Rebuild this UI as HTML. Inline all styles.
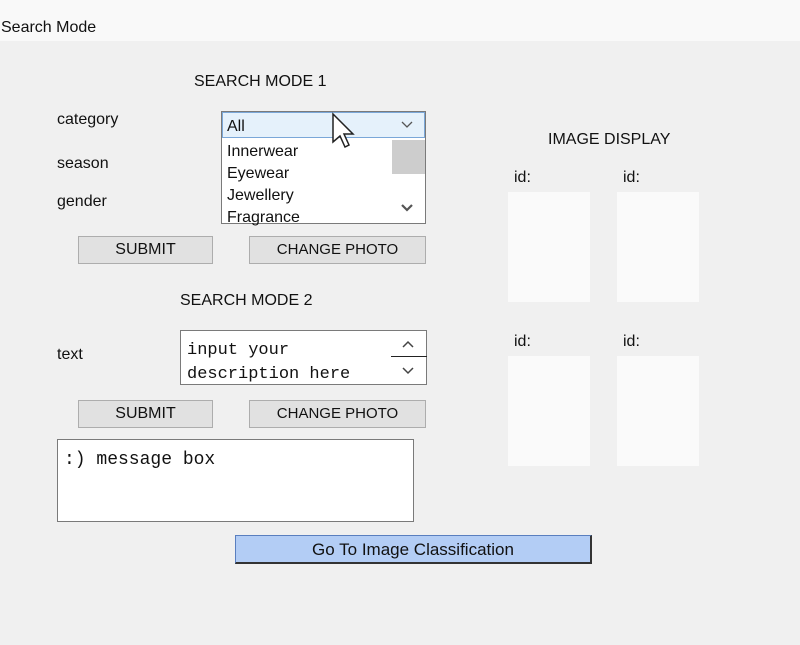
<!DOCTYPE html>
<html><head><style>
body{margin:0;width:800px;height:645px;background:#f0f0f0;font-family:"Liberation Sans",sans-serif;position:relative;overflow:hidden;color:#111}
.a{position:absolute}
.t{font-size:16px}
.btn{position:absolute;background:#e1e1e1;border:1px solid #adadad;box-sizing:border-box;text-align:center;font-size:16px;line-height:26px}
.img{position:absolute;background:#fafafa;width:82px;height:110px}
.mono{font-family:"Liberation Mono",monospace;font-size:18px}
</style></head><body>
<div class="a" style="left:0;top:0;width:800px;height:41px;background:#f9f9f9"></div>
<div class="a t" style="left:1px;top:19px">Search Mode</div>
<div class="a t" style="left:194px;top:73px">SEARCH MODE 1</div>
<div class="a t" style="left:57px;top:111px">category</div>
<div class="a t" style="left:57px;top:155px">season</div>
<div class="a t" style="left:57px;top:193px">gender</div>
<div class="a" style="left:221px;top:111px;width:205px;height:113px;background:#fff;border:1px solid #7a7a7a;box-sizing:border-box">
 <div class="a" style="left:0;top:0;width:203px;height:26px;background:#e5f1fb;border:1px solid #7aa7d8;box-sizing:border-box"></div>
 <div class="a t" style="left:5px;top:6px">All</div>
 <svg class="a" style="left:178px;top:8px" width="14" height="10"><path d="M2 2 L7 7 L12 2" fill="none" stroke="#555" stroke-width="1.3"/></svg>
 <div class="a t" style="left:5px;top:29px;line-height:22px">Innerwear<br>Eyewear<br>Jewellery<br>Fragrance</div>
 <div class="a" style="left:170px;top:28px;width:33px;height:34px;background:#cdcdcd"></div>
 <svg class="a" style="left:178px;top:91px" width="14" height="10"><path d="M2 2 L7 7 L12 2" fill="none" stroke="#555" stroke-width="2.2"/></svg>
</div>
<svg class="a" style="left:330px;top:112px" width="28" height="40" viewBox="0 0 28 40"><path d="M3 2 L3 30 L10 24 L15 35 L19 33 L14 22 L23 22 Z" fill="#fff" stroke="#222" stroke-width="1.5"/></svg>
<div class="btn" style="left:78px;top:236px;width:135px;height:28px">SUBMIT</div>
<div class="btn" style="left:249px;top:236px;width:177px;height:28px;font-size:15px">CHANGE PHOTO</div>
<div class="a t" style="left:180px;top:292px">SEARCH MODE 2</div>
<div class="a t" style="left:57px;top:346px">text</div>
<div class="a" style="left:180px;top:330px;width:247px;height:55px;background:#fff;border:1px solid #7a7a7a;box-sizing:border-box">
 <div class="a mono" style="left:6px;top:8px;line-height:24px;font-size:17px">input your<br>description here</div>
 <div class="a" style="left:210px;top:25px;width:36px;height:1px;background:#222"></div>
 <svg class="a" style="left:220px;top:9px" width="14" height="10"><path d="M2 7 L7 2 L12 7" fill="none" stroke="#444" stroke-width="1.5"/></svg>
 <svg class="a" style="left:220px;top:35px" width="14" height="10"><path d="M2 2 L7 7 L12 2" fill="none" stroke="#444" stroke-width="1.5"/></svg>
</div>
<div class="btn" style="left:78px;top:400px;width:135px;height:28px">SUBMIT</div>
<div class="btn" style="left:249px;top:400px;width:177px;height:28px;font-size:15px">CHANGE PHOTO</div>
<div class="a" style="left:57px;top:439px;width:357px;height:83px;background:#fff;border:1px solid #7a7a7a;box-sizing:border-box">
 <div class="a mono" style="left:6px;top:10px">:) message box</div>
</div>
<div class="btn" style="left:235px;top:535px;width:357px;height:29px;background:#b3cdf5;border:1px solid #5a7fbf;border-right:2px solid #333;border-bottom:2px solid #333;font-size:17px;line-height:28px">Go To Image Classification</div>
<div class="a t" style="left:548px;top:131px">IMAGE DISPLAY</div>
<div class="a t" style="left:514px;top:169px">id:</div>
<div class="a t" style="left:623px;top:169px">id:</div>
<div class="img" style="left:508px;top:192px"></div>
<div class="img" style="left:617px;top:192px"></div>
<div class="a t" style="left:514px;top:333px">id:</div>
<div class="a t" style="left:623px;top:333px">id:</div>
<div class="img" style="left:508px;top:356px"></div>
<div class="img" style="left:617px;top:356px"></div>
</body></html>
